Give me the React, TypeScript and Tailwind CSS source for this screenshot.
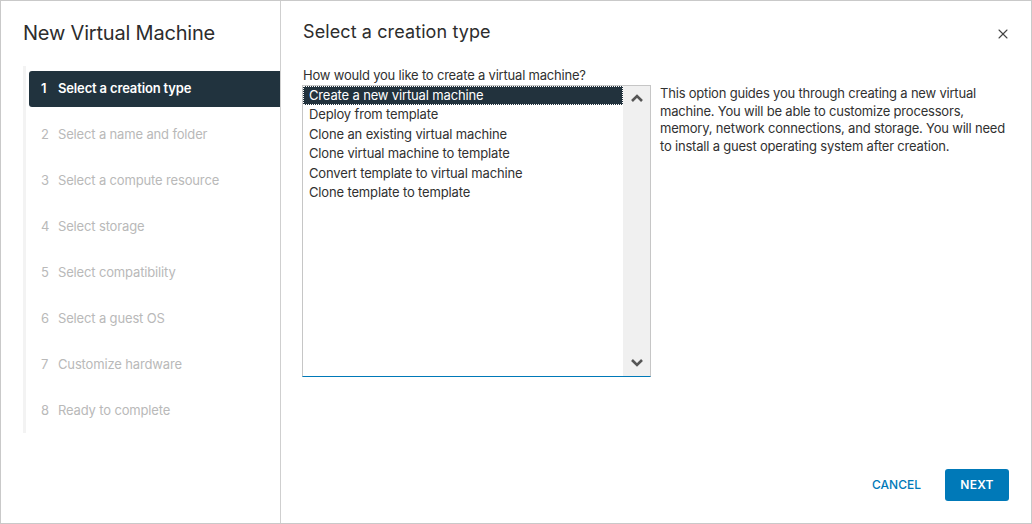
import { X } from "lucide-react";

const steps = [
  "Select a creation type",
  "Select a name and folder",
  "Select a compute resource",
  "Select storage",
  "Select compatibility",
  "Select a guest OS",
  "Customize hardware",
  "Ready to complete",
];

const options = [
  "Create a new virtual machine",
  "Deploy from template",
  "Clone an existing virtual machine",
  "Clone virtual machine to template",
  "Convert template to virtual machine",
  "Clone template to template",
];

function Chevron({ up }: { up?: boolean }) {
  return (
    <svg width="14" height="10" viewBox="0 0 14 10" className="text-[#565656]">
      <path
        d={up ? "M2 8 L7 3 L12 8" : "M2 2 L7 7 L12 2"}
        fill="none"
        stroke="currentColor"
        strokeWidth="2.6"
      />
    </svg>
  );
}

export default function App() {
  return (
    <div className="w-[1032px] h-[524px] bg-white border border-[#c9c9c9] flex font-['Inter',sans-serif] text-[#313131] overflow-hidden">
      {/* wizard steps */}
      <div className="w-[280px] shrink-0 border-r border-[#cfcfcf] flex flex-col">
        <h1 className="pl-[22px] pt-[19px] h-[65px] text-[20px] leading-[26px] text-[#2d2d2d] tracking-[-0.2px]">
          New Virtual Machine
        </h1>
        <div className="ml-[22px] border-l-[3px] border-[#f3f3f3] pt-[5px] pb-[4px] flex flex-col gap-[10px]">
          {steps.map((s, i) => (
            <div
              key={s}
              className={
                i === 0
                  ? "ml-[3px] h-[36px] flex items-center rounded-l-[3px] bg-[#21333e] text-white font-semibold text-[13px] tracking-[-0.15px]"
                  : "ml-[3px] h-[36px] flex items-center text-[#b9b9b9] text-[13px] tracking-[-0.15px]"
              }
            >
              <span className="w-[29px] pl-[12px]">{i + 1}</span>
              <span>{s}</span>
            </div>
          ))}
        </div>
      </div>

      {/* step content */}
      <div className="flex-1 flex flex-col pl-[22px] pr-[22px]">
        <div className="flex items-start justify-between pt-[19px]">
          <h2 className="text-[18px] leading-[24px] text-[#2d2d2d] tracking-[0.1px]">Select a creation type</h2>
          <X size={16} strokeWidth={1.6} className="mt-[6px] mr-[1px] text-[#444]" />
        </div>
        <div className="mt-[23px] text-[13px] leading-[16px] tracking-[-0.2px]">
          How would you like to create a virtual machine?
        </div>
        <div className="flex gap-[9px] mt-[2px] -ml-[1px]">
          <div className="w-[349px] h-[292px] border border-[#c6c6c6] border-b-[#0079b8] flex shrink-0">
            <div className="flex-1 flex flex-col text-[13px] tracking-[-0.15px]">
              {options.map((o, i) => (
                <div
                  key={o}
                  className={
                    i === 0
                      ? "h-[19px] pl-[6px] flex items-center bg-[#22323d] text-white outline-1 outline-dotted outline-white -outline-offset-1"
                      : "h-[19.5px] pl-[6px] flex items-center"
                  }
                >
                  {o}
                </div>
              ))}
            </div>
            <div className="w-[27px] bg-[#f0f0f0] flex flex-col items-center justify-between pt-[7px] pb-[8px]">
              <Chevron up />
              <Chevron />
            </div>
          </div>
          <p className="text-[13px] leading-[17.6px] w-[352px] tracking-[-0.2px]">
            This option guides you through creating a new virtual machine. You will be able to
            customize processors, memory, network connections, and storage. You will need to install
            a guest operating system after creation.
          </p>
        </div>
        <div className="mt-auto mb-[22px] mr-[3px] flex justify-end items-center gap-[24px]">
          <button className="text-[12px] font-medium text-[#0079b8]">CANCEL</button>
          <button className="w-[64px] h-[32px] rounded-[3px] bg-[#0079b8] text-white text-[12px] font-semibold tracking-[0.2px]">
            NEXT
          </button>
        </div>
      </div>
    </div>
  );
}
